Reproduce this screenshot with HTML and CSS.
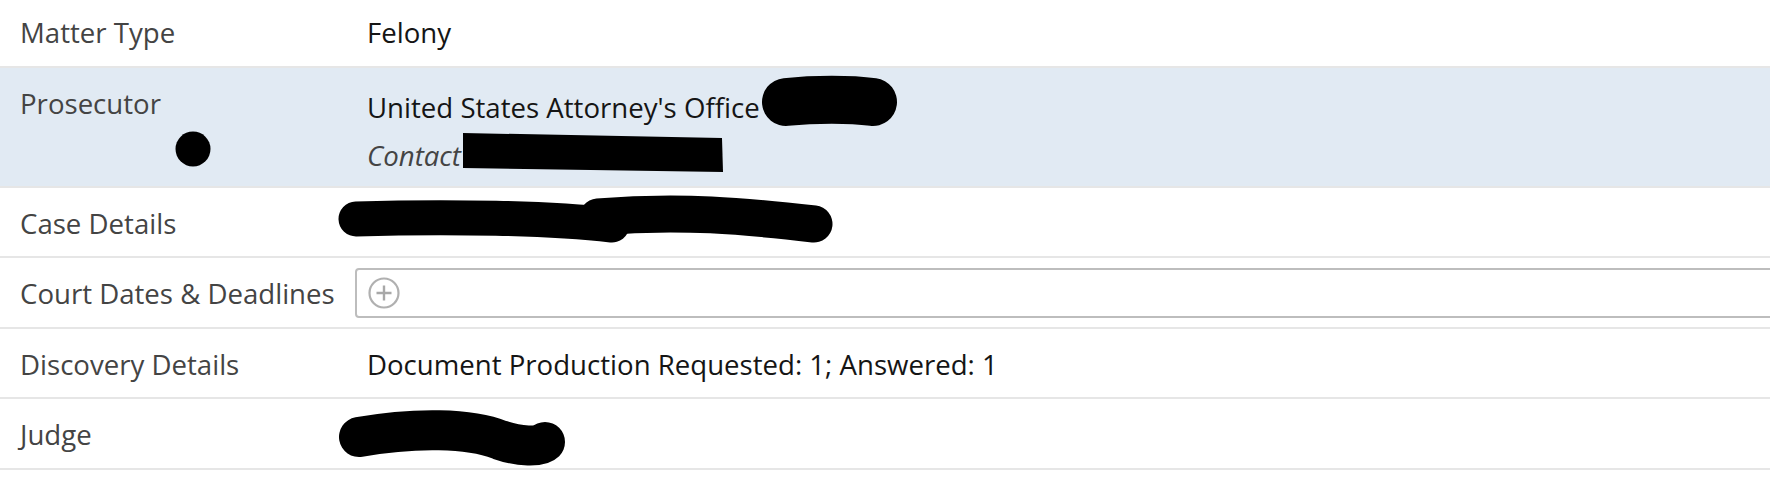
FILE: index.html
```html
<!DOCTYPE html>
<html lang="en">
<head>
<meta charset="utf-8">
<title>Matter Details</title>
<link rel="stylesheet" href="styles.css">
</head>
<body>
<div class="page">
  <div class="table">
    <div class="row">
      <div class="label">Matter Type</div>
      <div class="value">Felony</div>
    </div>
    <div class="row row-active">
      <div class="label">Prosecutor</div>
      <div class="value value-stack">
        <div class="line">United States Attorney's Office</div>
        <div class="line line-sub">Contact</div>
      </div>
    </div>
    <div class="row">
      <div class="label">Case Details</div>
      <div class="value"></div>
    </div>
    <div class="row">
      <div class="label">Court Dates &amp; Deadlines</div>
      <div class="value value-box">
        <div class="input-box">
          <svg class="add-icon" width="32" height="32" viewBox="0 0 32 32">
            <circle cx="16" cy="16" r="14.5" fill="none" stroke="#b0b0b0" stroke-width="2.2"/>
            <path d="M16 8.5v15M8.5 16h15" stroke="#a8a8a8" stroke-width="2.4" stroke-linecap="butt"/>
          </svg>
        </div>
      </div>
    </div>
    <div class="row">
      <div class="label">Discovery Details</div>
      <div class="value">Document Production Requested: 1; Answered: 1</div>
    </div>
    <div class="row">
      <div class="label">Judge</div>
      <div class="value"></div>
    </div>
  </div>

  <svg class="redactions" width="1770" height="483" viewBox="0 0 1770 483">
    <circle cx="193" cy="149" r="17.5" fill="#000"/>
    <path d="M786 102 C815 99, 850 99, 873 102" fill="none" stroke="#000" stroke-width="48" stroke-linecap="round"/>
    <polygon points="463,133 722,138 723,172 463,168" fill="#000"/>
    <path d="M356 219 C450 216, 550 218, 612 225" fill="none" stroke="#000" stroke-width="35" stroke-linecap="round"/>
    <path d="M598 217 C680 210, 745 216, 814 224" fill="none" stroke="#000" stroke-width="37" stroke-linecap="round"/>
    <path d="M359 437 C415 427, 470 428, 500 440 C520 447, 540 447, 545 442" fill="none" stroke="#000" stroke-width="40" stroke-linecap="round"/>
  </svg>
</div>
</body>
</html>
```
FILE: styles.css
```css
html, body {
  margin: 0;
  padding: 0;
  background: #fff;
  overflow: hidden;
}

body {
  font-family: "Open Sans", "Noto Sans", sans-serif;
  font-size: 27.6px;
  line-height: 36px;
  color: #1b1b1b;
}

.page {
  position: relative;
  width: 1770px;
  height: 483px;
  overflow: hidden;
}

.table {
  margin-top: -3px;
  width: 1810px;
}

.row {
  display: grid;
  grid-template-columns: 355px 1fr;
  border-bottom: 2px solid #e6e6e6;
}

.row-active {
  background: #e1eaf3;
}

.label {
  padding: 17px 0 15.5px 20px;
  color: #444;
  white-space: nowrap;
}

.value {
  padding: 17px 0 15.5px 12px;
  color: #151515;
  white-space: nowrap;
}

.value-stack {
  padding-top: 21px;
  padding-bottom: 13px;
}

.line-sub {
  margin-top: 12px;
  font-style: italic;
  color: #444;
}

.value-box {
  padding: 10px 0 8.5px 0;
}

.input-box {
  height: 50px;
  box-sizing: border-box;
  border: 2px solid #bdbdbd;
  border-radius: 4px;
  display: flex;
  align-items: center;
  padding-left: 11px;
}

.add-icon {
  display: block;
}

.redactions {
  position: absolute;
  top: 0;
  left: 0;
  pointer-events: none;
}
```
